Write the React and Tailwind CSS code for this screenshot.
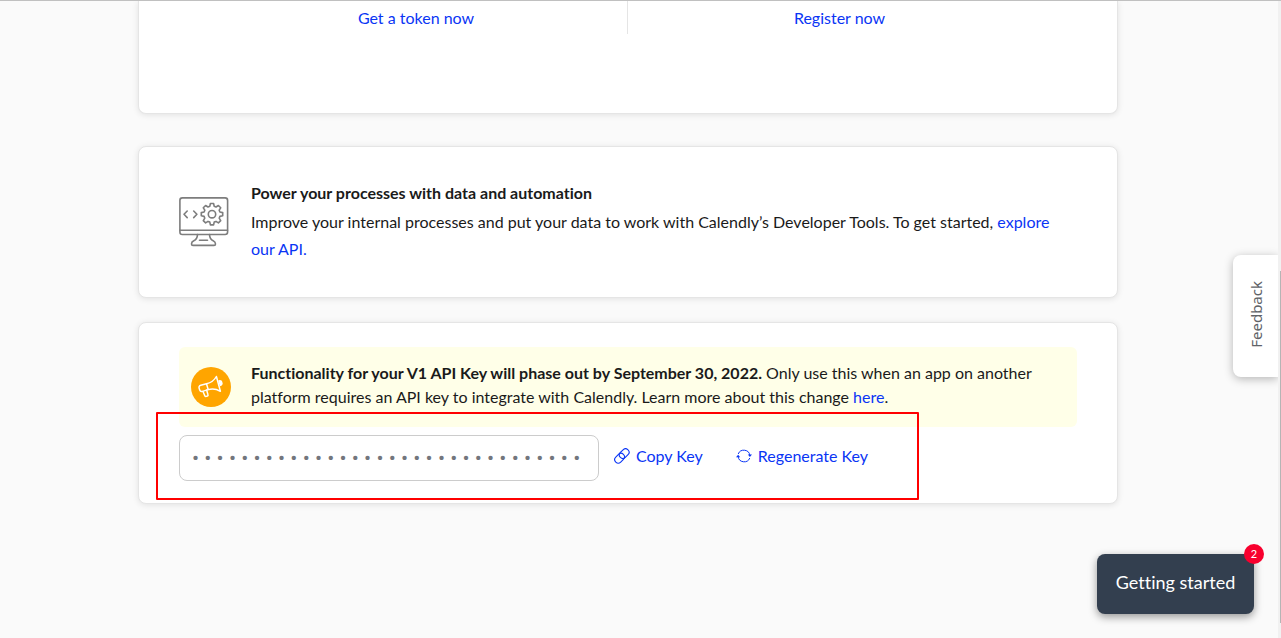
import React from "react";

const KEY_MASK = Array(32).fill("•").join("\u00a0");

function MonitorIcon() {
  return (
    <svg className="h-[50px] w-[50px] shrink-0" viewBox="0 0 50 50" fill="none" stroke="#7d7d7d" strokeWidth="1.6" strokeLinecap="round" strokeLinejoin="round" aria-hidden="true">
      <rect x="0.9" y="0.9" width="47.7" height="36.6" rx="2.5" />
      <path d="M1 33.2h47.5" />
      <path d="M18.5 37.6c-.2 3.200-1.200 5-3.700 6.200-1.500.7-2.300 1.900-2.300 3.200 0 .9.600 1.400 1.500 1.400h21c.9 0 1.500-.5 1.500-1.400 0-1.300-.8-2.500-2.300-3.200-2.500-1.200-3.500-3-3.700-6.200" />
      <path d="M20.500 43.300h8" />
      <path d="M8.200 14 5 17.300l3.200 3.300M14.700 14l3.200 3.300-3.200 3.300" />
      <circle cx="33" cy="17.200" r="3.700" />
      <path d="M31.400 6.500h3.200l.6 2.800 1.800.7 2.400-1.500 2.300 2.300-1.500 2.400.7 1.800 2.800.6v3.200l-2.800.6-.7 1.800 1.500 2.400-2.300 2.300-2.400-1.500-1.800.7-.6 2.800h-3.200l-.6-2.800-1.800-.7-2.400 1.500-2.300-2.300 1.500-2.400-.7-1.800-2.800-.6v-3.200l2.800-.6.7-1.800-1.500-2.400 2.300-2.300L29 10l1.800-.7z" />
    </svg>
  );
}

function MegaphoneIcon() {
  return (
    <svg className="h-10 w-10 shrink-0" viewBox="0 0 40 40" fill="none" aria-hidden="true">
      <circle cx="20" cy="20" r="20" fill="#ffa500" />
      <g stroke="#fff" strokeWidth="1.500" strokeLinejoin="round" strokeLinecap="round">
        <path d="M15.500 16.800c4.300-1 7.800-3.500 9.900-7.300l4 14.800c-3.900-2.300-8-2.900-12.200-1.700z" />
        <path d="m15.500 16.800-5.700 1.500c-1.400.4-2.100 1.500-1.700 2.800l.6 2c.4 1.200 1.500 1.700 2.800 1.300l5.700-1.800" />
        <path d="m12 24.500 1.800 4.200c.3.700.8.900 1.500.7l1.100-.4c.6-.2.800-.7.600-1.300L15.600 23" />
        <path d="M28 13.900c1.500-.3 2.500.4 2.800 1.600.4 1.300-.2 2.400-1.500 2.900z" fill="#fff" />
      </g>
    </svg>
  );
}

function LinkIcon() {
  return (
    <svg className="h-4 w-4" viewBox="0 0 16 16" fill="none" stroke="currentColor" strokeWidth="1.100" aria-hidden="true">
      <rect x="-5.400" y="-3.500" width="10.800" height="7" rx="3.500" transform="translate(10.200 5.600) rotate(-45)" />
      <rect x="-5.400" y="-3.500" width="10.800" height="7" rx="3.500" transform="translate(5.600 10.200) rotate(-45)" />
    </svg>
  );
}

function RefreshIcon() {
  return (
    <svg className="h-4 w-4" viewBox="0 0 16 16" fill="none" stroke="currentColor" aria-hidden="true">
      <path d="M2.200 6A6.100 6.100 0 0 1 13.900 7.500M13.800 10A6.100 6.100 0 0 1 2.100 8.500" />
      <path d="M11.800 6.600h4.200l-2.100 2.400zM0 9.200h4.200L2.100 6.800z" fill="currentColor" stroke="none" />
    </svg>
  );
}

const card = "rounded-lg border border-[#e5e5e5] bg-white shadow-[0_1px_6px_rgba(0,0,0,0.1)]";
const link = "text-[#0a35f5] hover:underline";

export default function App() {
  return (
    <div className="relative flex min-h-screen overflow-hidden border-t border-[#c0c0c0] bg-[#fafafa] font-['Lato',sans-serif] text-base text-[#1a1a1a] [font-variant-ligatures:none]">
      <main className="min-w-0 flex-1 pr-[22px]">
        <div className="mx-auto flex max-w-[980px] flex-col">
          <section className="rounded-b-lg border border-t-0 border-[#e5e5e5] bg-white pb-[79px] shadow-[0_1px_6px_rgba(0,0,0,0.1)]">
            <div className="mx-auto grid max-w-[846px] grid-cols-2 text-center leading-[34px]">
              <div className="h-[33px] border-r border-[#e5e5e5]">
                <a href="#token" className={link}>Get a token now</a>
              </div>
              <div className="h-[33px]">
                <a href="#register" className={link}>Register now</a>
              </div>
            </div>
          </section>

          <section className={`${card} mt-8 flex items-center gap-[22px] px-10 py-[31px]`}>
            <MonitorIcon />
            <div className="pr-4">
              <h2 className="leading-[30px] font-bold">Power your processes with data and automation</h2>
              <p className="pb-1 leading-[27px]">
                Improve your internal processes and put your data to work with Calendly’s Developer Tools. To get started,{" "}
                <a href="#api" className={link}>explore our API.</a>
              </p>
            </div>
          </section>

          <section className={`${card} mt-6 px-10 pt-6 pb-[22px]`}>
            <div className="flex items-start gap-5 rounded-md bg-[#ffffe8] px-3 pt-[14px] pb-[18px]">
              <div className="pt-1.5">
                <MegaphoneIcon />
              </div>
              <p className="leading-6">
                <strong className="font-bold">Functionality for your V1 API Key will phase out by September 30, 2022.</strong>{" "}
                Only use this when an app on another platform requires an API key to integrate with Calendly. Learn more about this change{" "}
                <a href="#change" className={link}>here</a>.
              </p>
            </div>
            <div className="relative mt-2 flex items-center">
              <input
                type="text"
                readOnly
                aria-label="API key"
                value={KEY_MASK}
                className="h-[46px] w-[420px] rounded-lg border border-[#cccccc] bg-white px-3 font-['Roboto',sans-serif] text-[21px] text-[#73767d] outline-none"
              />
              <button type="button" className={`${link} ml-[15px] flex items-center gap-1.5 pb-1`}>
                <LinkIcon />
                Copy Key
              </button>
              <button type="button" className={`${link} ml-[33px] flex items-center gap-1.5 pb-1`}>
                <RefreshIcon />
                Regenerate Key
              </button>
              <div className="pointer-events-none absolute -top-[23px] -left-[23px] h-[88px] w-[763px] rounded-[1px] border-2 border-[#ff0000]" />
            </div>
          </section>
        </div>
      </main>

      <div className="flex w-[3px] justify-end bg-[#f1f1f1]" aria-hidden="true">
        <div className="mt-[270px] h-[352px] w-px bg-[#b5b5b5]" />
      </div>

      <button type="button" className="absolute top-[254px] right-[3px] flex h-[122px] w-[45px] items-center justify-center rounded-l-lg bg-white pb-[3px] pl-0.5 font-['Noto_Sans',sans-serif] text-[15px] text-[#5f6368] shadow-[0_2px_10px_rgba(0,0,0,0.28)] [clip-path:inset(-20px_0_-20px_-20px)]">
        <span className="rotate-180 [writing-mode:vertical-rl]">Feedback</span>
      </button>

      <button type="button" className="absolute right-[27px] bottom-6 h-[60px] w-[157px] rounded-lg bg-[#333f4f] pb-1 text-lg text-white shadow-[0_3px_8px_rgba(0,0,0,0.4)]">
        Getting started
        <span className="absolute -top-2.5 -right-2.5 flex h-5 w-5 items-center justify-center rounded-full bg-[#f8002e] text-[11px]">2</span>
      </button>
    </div>
  );
}
